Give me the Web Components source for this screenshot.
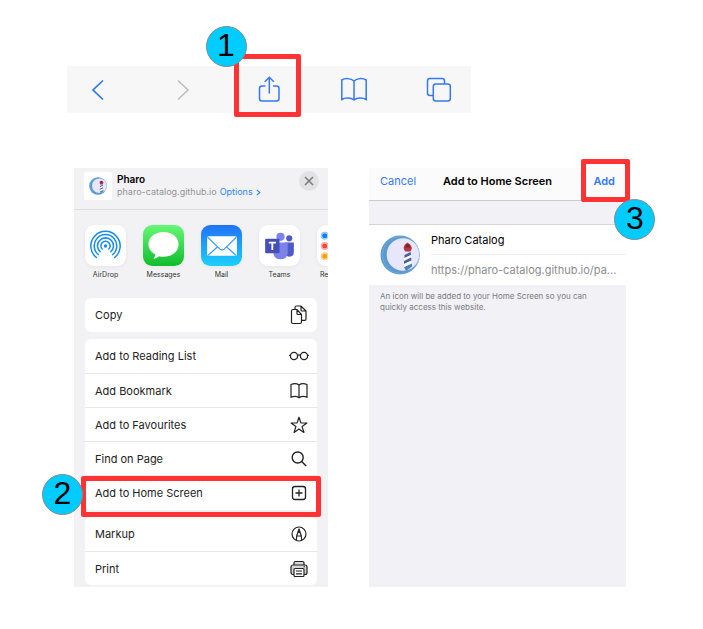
<!DOCTYPE html>
<html lang="en">
<head>
<meta charset="utf-8">
<meta name="viewport" content="width=device-width, initial-scale=1">
<title>Add Pharo Catalog to your Home Screen</title>
<style>
body { margin: 0; background: #fff; font-family: Inter, "Liberation Sans", sans-serif; color: #000; }
</style>
</head>
<body>
<install-guide></install-guide>
<script>
const ICONS = {
  back: ['0 0 24 24', '<path d="M17 2.500 7 12l10 9.500" stroke="#2f74f0" stroke-width="1.700"/>'],
  forward: ['0 0 24 24', '<path d="M7 2.500 17 12 7 21.500" stroke="#bcbcbe" stroke-width="1.500"/>'],
  share: ['0 0 24 28', '<g stroke="#3478f6" stroke-width="1.500"><path d="M8.500 10H5q-2.500 0-2.500 2.500v10Q2.500 25 5 25h14.500q2.500 0 2.500-2.500v-10Q22 10 19.500 10H16"/><path d="M12.300 17.500V1.500M7.800 5.800l4.500-4.500 4.500 4.500"/></g>'],
  tabbook: ['0 0 28 26', '<g stroke="#3478f6" stroke-width="1.500"><path d="M14 4v19M14 4C11 1 5 1 1.800 3v19.500c3.500-2 9-2 12.200.500 3.200-2.500 8.700-2.500 12.200-.500V3C23 1 17 1 14 4z"/></g>'],
  tabs: ['0 0 28 28', '<g stroke="#3478f6" stroke-width="1.500"><path d="M8 19.500H5q-2.500 0-2.500-2.500V5Q2.500 2.500 5 2.500h12q2.500 0 2.500 2.500v3"/><rect x="8.300" y="8" width="17" height="17" rx="2.500"/></g>'],
  close: ['0 0 20 20', '<path d="m6 6 8 8m0-8-8 8" stroke="#77777b" stroke-width="1.500"/>'],
  chevron: ['0 0 6 8', '<path d="m1 1 3.500 3L1 7" stroke="#2b86f5" stroke-width="1.300"/>'],
  copy: ['0 0 20 20', '<g stroke-width="1.200"><path d="M6 4.500V2.500Q6 1 7.500 1H12l5 5v8q0 1.300-1.300 1.300H13M12 1v4q0 1 1 1h4"/><path d="M4 4.500h4l4.500 5V17q0 1.500-1.500 1.500H4Q2.500 18.500 2.500 17V6Q2.500 4.500 4 4.500zM8 4.500V8.500q0 1 1 1h3.500"/></g>'],
  glasses: ['0 0 20 20', '<g stroke-width="1.300"><circle cx="5" cy="10" r="3.600"/><circle cx="15" cy="10" r="3.600"/><path d="M8.600 9.300q1.400-.900 2.800 0M.200 9.300h1.300M18.500 9.300h1.300"/></g>'],
  book: ['0 0 20 20', '<path stroke-width="1.200" d="M10 4v13M10 4C8 2.500 4.500 2.500 2 3.500v12.700c2.700-1 5.700-1 8 .500 2.300-1.500 5.300-1.500 8-.500V3.500c-2.500-1-6-1-8 .500z"/>'],
  star: ['0 0 20 20', '<path stroke-width="1.200" stroke-linejoin="round" d="m10 2.200 1.900 5.700 6 .100-4.800 3.600 1.800 5.800L10 13.900l-4.900 3.500 1.800-5.800L2.100 8l6-.100z"/>'],
  search: ['0 0 20 20', '<g stroke-width="1.400"><circle cx="8.700" cy="8.500" r="5.500"/><path d="m12.700 12.500 4.500 4.500"/></g>'],
  add: ['0 0 20 20', '<g stroke-width="1.300"><rect x="3.500" y="3.500" width="13" height="13" rx="2.500"/><path d="M10 6.500v7M6.500 10h7"/></g>'],
  markup: ['0 0 20 20', '<g stroke-width="1.200"><circle cx="10" cy="10" r="7"/><path d="m7.300 16 .500-4.500L10 5.500l2.200 6 .500 4.500M7.800 12h4.400"/></g><path d="m9 8.300 1-3 1 3z" fill="#222" stroke="#222"/>'],
  print: ['0 0 20 20', '<g stroke-width="1.200"><path d="M5 6V3.800Q5 2.500 6.300 2.500h7.400Q15 2.500 15 3.800V6" fill="#d7d7d9"/><rect x="2" y="6" width="16" height="9.500" rx="2" fill="#d7d7d9"/><rect x="5" y="9.500" width="10" height="8" rx="1" fill="#fff"/><path d="M7 12h6M7 14.800h6"/><path d="M14.600 7.800h1.400" stroke-width="1"/></g>'],
  logo: ['0 0 40 40', '<circle cx="20" cy="20" r="19.500" fill="#5b9bd1"/><circle cx="23" cy="19.500" r="16.300" fill="#e7e6fa"/><circle cx="21" cy="20" r="18.500" stroke="#7bb3dc" stroke-width=".8" stroke-dasharray="2 1"/><path d="m24.500 20 6-3 .500 3-6.500 3zM24 26l7-3.500.500 3L24 29z" fill="#456397"/><path d="m24 32 8-3.500v3L26 36z" fill="#4d7fbc"/><path d="m24.500 23 6.500-3v2l-7 3.500zM24 29l7.500-3.500v3L24 32z" fill="#f8f7ff"/><path d="m23.500 13 1-3 3-2.500L30.500 10l1.500 3-1.500 3.500h-5.500z" fill="#b8343e"/><path d="M26 9.500h3.500l.500 3h-4.500z" fill="#6b292e"/>'],
  airdrop: ['0 0 40 40', '<rect width="40" height="40" rx="9" fill="#fff"/><g stroke="#168cf0" stroke-width="1.500"><path d="M11.500 32a14.300 14.300 0 1 1 17 0M13.500 29.200a11 11 0 1 1 13 0M15.200 26.500a7.800 7.800 0 1 1 9.600 0M17.200 23.900a4.500 4.500 0 1 1 5.600 0"/></g><path d="m20 22.500-7 12h14z" fill="#fff"/><circle cx="20" cy="20.500" r="1.700" fill="#168cf0"/>'],
  messages: ['0 0 40 40', '<defs><linearGradient id="g" x2="0" y2="1"><stop stop-color="#67f777"/><stop offset="1" stop-color="#0fbd2c"/></linearGradient></defs><rect width="40" height="40" rx="9" fill="url(#g)"/><path d="M20 6.800c8.500 0 14.700 5.200 14.700 12S28.500 31 20 31c-1.700 0-3-.2-4.500-.6-1.300 1.300-3.300 2.200-5.500 2.300 1.300-1.200 1.900-2.500 2-4C7.700 26.500 5.300 23 5.300 18.800c0-6.800 6.200-12 14.700-12z" fill="#fff"/>'],
  mail: ['0 0 40 40', '<defs><linearGradient id="g" x2="0" y2="1"><stop stop-color="#2272f4"/><stop offset="1" stop-color="#1bd0fd"/></linearGradient></defs><rect width="40" height="40" rx="9" fill="url(#g)"/><rect x="6" y="11" width="29" height="19" rx="1.500" fill="#fff"/><path d="m6.500 12 12 11.500q2 1.800 4 0L34.500 12M7 29.500l9.500-8.500M34 29.500 24.500 21" stroke="#399ef4" stroke-width="1.200"/>'],
  teams: ['0 0 40 40', '<rect width="40" height="40" rx="9" fill="#fff"/><circle cx="29.500" cy="13" r="3" fill="#5059c9"/><path d="M25 17h9v9.500q0 4.500-5 4.500-3-.500-4-3z" fill="#5059c9"/><circle cx="21" cy="11.500" r="4" fill="#7b83eb"/><path d="M14 17h14v9.500q0 7-7 7t-7-7z" fill="#7b83eb"/><rect x="6" y="13.500" width="14" height="14" rx="1" fill="#464eb8"/><path d="M9.500 17.200h7M13 17.200v7.300" stroke="#fff" stroke-width="1.800"/>'],
  reminders: ['0 0 40 40', '<rect width="40" height="40" rx="9" fill="#fff"/><g stroke-width="1"><circle cx="7.500" cy="10.500" r="3.300" stroke="#8fc4fa"/><circle cx="7.500" cy="20.500" r="3.300" stroke="#fca5a2"/><circle cx="7.500" cy="30.500" r="3.300" stroke="#fdcc85"/></g><circle cx="7.500" cy="10.500" r="2.500" fill="#0f7ef5"/><circle cx="7.500" cy="20.500" r="2.500" fill="#fb4039"/><circle cx="7.500" cy="30.500" r="2.500" fill="#fa9d16"/><path d="M14 10.500h22M14 20.500h22M14 30.500h22" stroke="#d5d5d8"/>']
};

const define = (name, render) => customElements.define(name, class extends HTMLElement {
  connectedCallback() {
    if (this.shadowRoot) return;
    this.attachShadow({ mode: 'open' }).innerHTML = render(this);
  }
});

const RESET = `*{box-sizing:border-box}button{appearance:none;border:0;margin:0;padding:0;background:none;font:inherit;color:inherit;cursor:pointer}`;

define('line-icon', el => {
  const [box, art] = ICONS[el.getAttribute('name')];
  return `<style>:host{display:block;flex:none;width:var(--icon-size,20px);height:var(--icon-size,20px)}svg{display:block;width:100%;height:100%}</style>
  <svg viewBox="${box}" fill="none" stroke="none" aria-hidden="true"><g ${/^(copy|glasses|book|star|search|add|markup|print)$/.test(el.getAttribute('name')) ? 'stroke="#222"' : ''}>${art}</g></svg>`;
});

define('step-marker', el => `<style>
  :host{display:block;position:relative}
  .ring{position:absolute;z-index:2;inset:var(--ring);border:5px solid #f33;border-radius:2px;pointer-events:none;box-sizing:border-box}
  .badge{position:absolute;left:var(--badge-left);top:var(--badge-top);width:41px;height:41px;box-sizing:border-box;border:1px solid #808b90;border-radius:50%;background:#0cf;display:grid;place-items:center;font:32px/32px "Liberation Sans",Arial,sans-serif;color:#000;padding-bottom:4px}
</style><slot></slot><div class="ring"><span class="badge">${el.getAttribute('step')}</span></div>`);

define('browser-toolbar', () => `<style>${RESET}
  :host{display:block;background:#f7f7f7}
  nav{display:flex;justify-content:space-between;padding:0 20px 0 19px}
  button{width:24px;height:47px;display:flex;align-items:center;justify-content:center;--icon-size:24px}
  .large{--icon-size:28px}
  step-marker{--ring:-12px -20px -4px -23px;--badge-left:-33px;--badge-top:-33px}
</style><nav aria-label="Browser">
  <button aria-label="Back"><line-icon name="back"></line-icon></button>
  <button aria-label="Forward"><line-icon name="forward"></line-icon></button>
  <step-marker step="1"><button class="large" aria-label="Share"><line-icon name="share"></line-icon></button></step-marker>
  <button class="large" aria-label="Bookmarks"><line-icon name="tabbook"></line-icon></button>
  <button class="large" aria-label="Tabs"><line-icon name="tabs"></line-icon></button>
</nav>`);

define('share-target', el => `<style>${RESET}
  :host{display:block;flex:none;width:41px}
  button{width:100%;display:flex;flex-direction:column;align-items:center;gap:4px;--icon-size:41px}
  line-icon{border-radius:9px;box-shadow:0 1px 4px #0000000d}
  span{font-size:7px;line-height:10px;white-space:nowrap;color:#333}
</style><button><line-icon name="${el.getAttribute('icon')}"></line-icon><span><slot></slot></span></button>`);

define('action-row', el => `<style>${RESET}
  :host{display:flex;flex:1;min-height:34px}
  button{flex:1;display:flex;align-items:center;justify-content:space-between;text-align:left;padding:0 8px 0 10px;font-size:11px;line-height:16px;color:#222}
</style><button><span><slot></slot></span><line-icon name="${el.getAttribute('icon')}"></line-icon></button>`);

define('action-group', () => `<style>
  :host{display:flex;flex-direction:column;background:#fff;border-radius:6px}
  ::slotted(:not(:first-child)){border-top:1px solid #e7e7e9}
  ::slotted(*){box-sizing:border-box}
</style><slot></slot>`);

define('share-sheet', () => `<style>${RESET}
  :host{display:block;min-width:0;background:#f2f2f4}
  header{display:flex;align-items:flex-start;gap:5px;padding:4px 9px 9px 10px;border-bottom:1px solid #dedee0}
  .thumb{width:28px;height:28px;background:#fff;border-radius:2px;display:grid;place-items:center;--icon-size:18px}
  .titles{flex:1;min-width:0;padding-top:1px}
  h2{margin:0;font-size:10px;line-height:13px;font-weight:600}
  p{margin:0;display:flex;gap:3px;font-size:9px;line-height:12px;color:#929296;white-space:nowrap}
  a{color:#2b86f5;text-decoration:none;display:flex;align-items:center;gap:2px}
  a line-icon{--icon-size:7px}
  .close{width:20px;height:20px;margin-top:-1px;border-radius:50%;background:#e2e2e5;--icon-size:20px}
  .targets{display:flex;gap:17px;padding:15px 0 18px 11px;overflow:hidden}
  .actions{display:grid;gap:7px;padding:0 11px 2px}
  .long{min-height:171px}
  step-marker{flex:1;display:flex;--ring:0 -4px -7px -4px;--badge-left:-44px;--badge-top:-7px}
</style>
<header>
  <div class="thumb"><line-icon name="logo"></line-icon></div>
  <div class="titles"><h2>Pharo</h2><p><span>pharo-catalog.github.io</span><a href="#options">Options<line-icon name="chevron"></line-icon></a></p></div>
  <button class="close" aria-label="Close"><line-icon name="close"></line-icon></button>
</header>
<div class="targets">
  <share-target icon="airdrop">AirDrop</share-target><share-target icon="messages">Messages</share-target><share-target icon="mail">Mail</share-target><share-target icon="teams">Teams</share-target><share-target icon="reminders">Reminders</share-target>
</div>
<div class="actions">
  <action-group><action-row icon="copy">Copy</action-row></action-group>
  <action-group class="long">
    <action-row icon="glasses">Add to Reading List</action-row>
    <action-row icon="book">Add Bookmark</action-row>
    <action-row icon="star">Add to Favourites</action-row>
    <action-row icon="search">Find on Page</action-row>
    <step-marker step="2"><action-row icon="add">Add to Home Screen</action-row></step-marker>
  </action-group>
  <action-group>
    <action-row icon="markup">Markup</action-row>
    <action-row icon="print">Print</action-row>
  </action-group>
</div>`);

define('home-screen-form', () => `<style>${RESET}
  :host{display:block;min-width:0;background:#f2f1f6}
  header{display:grid;grid-template-columns:1fr auto 1fr;align-items:center;padding:0 11px 6px;background:#fbfbfb;border-bottom:1px solid #cbcbce;font-size:11px;line-height:16px}
  header button{color:#3478f6;justify-self:start;height:26px}
  h2{margin:0;font-size:11px;font-weight:600;white-space:nowrap}
  step-marker{justify-self:end;--ring:-9px -15px -8px -12px;--badge-left:28px;--badge-top:35px}
  step-marker button{font-weight:600;display:block}
  .entry{display:flex;gap:11px;align-items:center;margin-top:23px;padding-left:11px;background:#fff;border-top:1px solid #d6d6da;--icon-size:40px}
  .fields{flex:1;min-width:0;font-size:11px;line-height:30px}
  input{display:block;width:100%;height:29px;border:0;padding:0;margin:0;background:none;font:inherit;color:#000;outline:0}
  .url{border-top:1px solid #ededf0;color:#8c8c90;overflow:hidden;text-overflow:ellipsis;white-space:nowrap}
  p{margin:0;padding:6px 11px;font-size:8px;line-height:11px;color:#7c7c82}
</style>
<header><button>Cancel</button><h2>Add to Home Screen</h2><step-marker step="3"><button>Add</button></step-marker></header>
<div class="entry"><line-icon name="logo"></line-icon>
  <div class="fields"><input aria-label="Name" value="Pharo Catalog"><div class="url">https://pharo-catalog.github.io/pa...</div></div>
</div>
<p>An icon will be added to your Home Screen so you can quickly access this website.</p>`);

define('install-guide', () => `<style>
  :host{display:block;padding:66px 77px 42px 67px}
  .top{display:grid;grid-template-columns:404fr 155fr}
  .panels{display:grid;grid-template-columns:254fr 257fr;gap:41px;margin:55px 0 0 7px}
</style>
<div class="top"><browser-toolbar></browser-toolbar></div>
<main class="panels"><share-sheet></share-sheet><home-screen-form></home-screen-form></main>`);
</script>
</body>
</html>
